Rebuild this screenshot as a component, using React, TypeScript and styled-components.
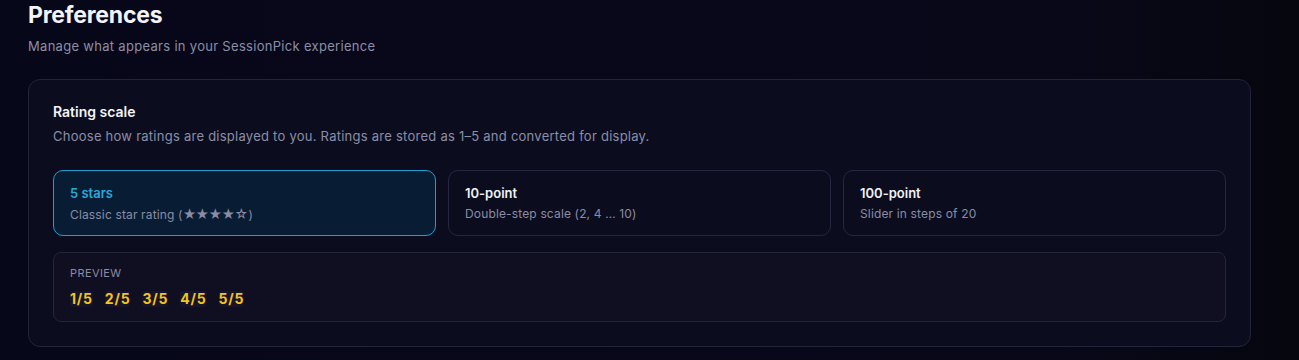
import styled, { createGlobalStyle } from 'styled-components';

const GlobalStyle = createGlobalStyle`
  html, body {
    margin: 0;
    padding: 0;
    background: #07071a;
  }
  body {
    font-family: Inter, "Noto Sans", sans-serif;
    color: #f1f2f7;
    -webkit-font-smoothing: antialiased;
  }
`;

const Page = styled.main`
  padding: 0 48px 0 28px;
  min-height: 360px;
  background: linear-gradient(90deg, #07071a 0%, #080819 80%, #06060f 100%);
`;

const Title = styled.h1`
  margin: 0;
  padding-top: 1px;
  font-size: 23px;
  line-height: 28px;
  font-weight: 700;
  letter-spacing: -0.2px;
  color: #f3f3f8;
`;

const Subtitle = styled.p`
  margin: 8px 0 0;
  font-size: 13px;
  line-height: 18px;
  letter-spacing: 0.3px;
  color: #8c8ea6;
`;

const Card = styled.section`
  margin-top: 24px;
  width: 1223px;
  box-sizing: border-box;
  padding: 23px 24px 24px;
  background: #0b0d1f;
  border: 1px solid #22243a;
  border-radius: 12px;
`;

const CardTitle = styled.h2`
  margin: 0;
  font-size: 14px;
  line-height: 18px;
  font-weight: 600;
  color: #f3f3f8;
`;

const CardText = styled.p`
  margin: 6px 0 0;
  font-size: 13px;
  line-height: 18px;
  letter-spacing: 0.25px;
  color: #8c8ea6;
`;

const Options = styled.div`
  margin-top: 25px;
  display: grid;
  grid-template-columns: repeat(3, 1fr);
  gap: 12px;
`;

const Option = styled.button<{ $active?: boolean }>`
  box-sizing: border-box;
  height: 66px;
  padding: 14px 16px;
  text-align: left;
  font-family: inherit;
  border-radius: 10px;
  cursor: pointer;
  border: 1px solid ${(p) => (p.$active ? '#1f9fd0' : '#252740')};
  background: ${(p) => (p.$active ? '#081d33' : '#0b0d1f')};
  display: flex;
  flex-direction: column;
  gap: 4px;
`;

const OptionTitle = styled.span<{ $active?: boolean }>`
  font-size: 13px;
  line-height: 17px;
  font-weight: 600;
  color: ${(p) => (p.$active ? '#27a9dc' : '#f1f2f7')};
`;

const OptionText = styled.span`
  font-size: 12px;
  line-height: 16px;
  letter-spacing: 0.15px;
  color: #8a8ca4;
`;

const Stars = styled.span`
  font-size: 13px;
  letter-spacing: -0.6px;
  margin-right: 1px;
`;

const Preview = styled.div`
  margin-top: 16px;
  box-sizing: border-box;
  height: 70px;
  padding: 13px 16px;
  background: #100f22;
  border: 1px solid #23253b;
  border-radius: 8px;
`;

const PreviewLabel = styled.div`
  font-size: 11px;
  line-height: 14px;
  letter-spacing: 0.4px;
  text-transform: uppercase;
  color: #8a8ca4;
`;

const Values = styled.div`
  margin-top: 11px;
  display: flex;
  gap: 12px;
`;

const Value = styled.span`
  font-size: 14px;
  line-height: 16px;
  font-weight: 700;
  letter-spacing: 0.8px;
  color: #f5c518;
  background: #15142a;
  border-radius: 3px;
`;

const options = [
  { title: '5 stars', text: 'Classic star rating', stars: '★★★★☆', active: true },
  { title: '10-point', text: 'Double-step scale (2, 4 … 10)' },
  { title: '100-point', text: 'Slider in steps of 20' },
];

export default function App() {
  return (
    <Page>
      <GlobalStyle />
      <Title>Preferences</Title>
      <Subtitle>Manage what appears in your SessionPick experience</Subtitle>
      <Card>
        <CardTitle>Rating scale</CardTitle>
        <CardText>
          Choose how ratings are displayed to you. Ratings are stored as 1–5 and converted for display.
        </CardText>
        <Options>
          {options.map((o) => (
            <Option key={o.title} $active={o.active}>
              <OptionTitle $active={o.active}>{o.title}</OptionTitle>
              <OptionText>
                {o.text}
                {o.stars && (
                  <>
                    {' ('}
                    <Stars>{o.stars}</Stars>)
                  </>
                )}
              </OptionText>
            </Option>
          ))}
        </Options>
        <Preview>
          <PreviewLabel>Preview</PreviewLabel>
          <Values>
            {[1, 2, 3, 4, 5].map((n) => (
              <Value key={n}>{n}/5</Value>
            ))}
          </Values>
        </Preview>
      </Card>
    </Page>
  );
}
